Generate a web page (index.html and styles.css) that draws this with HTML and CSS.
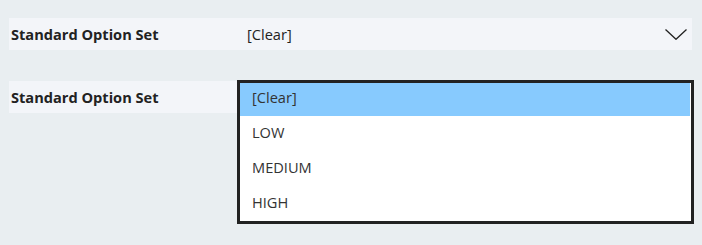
FILE: index.html
```html
<!DOCTYPE html>
<html lang="en">
<head>
    <meta charset="UTF-8">
    <meta name="viewport" content="width=device-width, initial-scale=1.0">
    <title>Standard Option Set</title>
    <link rel="stylesheet" href="styles.css">
</head>
<body>

<div class="page">
    <!-- Closed picker -->
    <div class="field-row closed">
        <div class="field-label">Standard Option Set</div>
        <div class="field-value">
            <span>[Clear]</span>
            <svg class="chevron" width="22" height="11" viewBox="0 0 22 11">
                <polyline points="0.5,0.5 11,10.3 21.5,0.5" fill="none" stroke="#222" stroke-width="1.3"/>
            </svg>
        </div>
    </div>

    <!-- Open picker -->
    <div class="field-row open">
        <div class="field-label">Standard Option Set</div>
        <ul class="option-list">
            <li class="selected">[Clear]</li>
            <li>LOW</li>
            <li>MEDIUM</li>
            <li>HIGH</li>
        </ul>
    </div>
</div>

</body>
</html>
```

FILE: styles.css
```css
body {
    margin: 0;
    background-color: #e9eef1;
    font-family: 'Open Sans', 'Noto Sans', sans-serif;
    font-size: 14.6px;
    color: #222;
}
.page {
    padding: 18px 8px 0 9px;
}
.field-row {
    display: flex;
    align-items: flex-start;
}
.field-row.closed {
    height: 32px;
    margin-right: 2px;
    background-color: #f3f5f9;
}
.field-row.open {
    margin-top: 30px;
}
.field-label {
    width: 226px;
    height: 32px;
    padding-left: 2px;
    display: flex;
    align-items: center;
    font-weight: 700;
    background-color: #f3f5f9;
}
.open .field-label {
    margin-top: 1px;
}
.field-value {
    flex: 1;
    height: 32px;
    padding: 0 5px 0 10px;
    display: flex;
    align-items: center;
    justify-content: space-between;
}
.chevron {
    display: block;
}
/* Dropdown list */
.option-list {
    flex: 1;
    height: 138px;
    margin: 0;
    padding: 0 1px 0 0;
    list-style: none;
    background-color: #fff;
    border: 3px solid #222;
    overflow: hidden;
}
.option-list li {
    height: 27px;
    margin-bottom: 2px;
    padding: 0 0 6px 12px;
    display: flex;
    align-items: center;
    color: #333;
}
.option-list li.selected {
    background-color: #87cafe;
}
```
